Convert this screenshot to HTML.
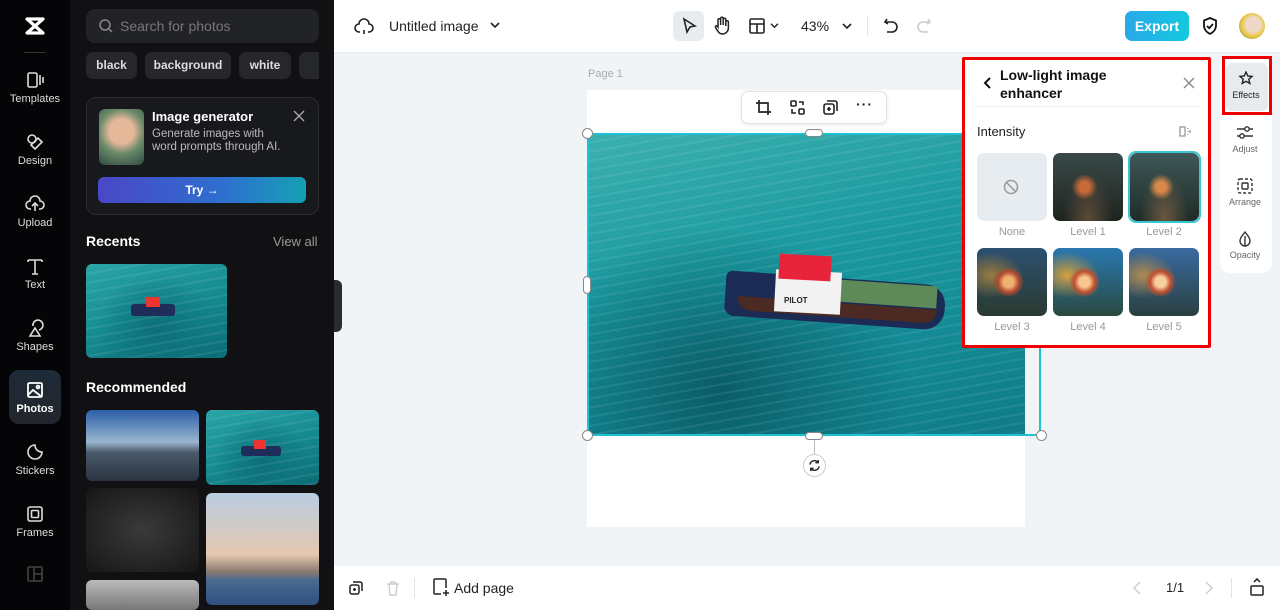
<!DOCTYPE html>
<html><head><meta charset="utf-8"><style>
*{box-sizing:border-box;margin:0;padding:0}
body{width:1280px;height:610px;overflow:hidden;font-family:"Liberation Sans",sans-serif;background:#f1f4f6;position:relative}
.abs{position:absolute}
.nav{left:0;top:0;width:70px;height:610px;background:#050507}
.navi{position:absolute;left:0;width:70px;text-align:center;color:#ddd;font-size:11px}
.navi svg{display:block;margin:0 auto 3px}
.panel{left:70px;top:0;width:264px;height:610px;background:#111114}
.chip{position:absolute;top:52px;height:27px;border-radius:7px;background:#26272b;color:#ddd;font-size:12px;font-weight:bold;line-height:27px;text-align:center}
.top{left:334px;top:0;width:946px;height:52px;background:#fff}
.bot{left:334px;top:566px;width:946px;height:44px;background:#fff}
.thumb{position:absolute;border-radius:6px;overflow:hidden}
.sea{background:radial-gradient(ellipse at 50% 70%,#0c6f78,transparent 60%),linear-gradient(160deg,#2aa5a8,#168c93 50%,#0b6c75)}
.waves{background-image:repeating-linear-gradient(170deg,rgba(255,255,255,.08) 0 2px,transparent 2px 9px)}
.lamp{position:absolute;width:70px;height:68px;border-radius:7px;overflow:hidden}
.lbl{position:absolute;width:70px;text-align:center;font-size:11px;color:#999}
.ti{position:absolute;width:48px;text-align:center;font-size:9px;color:#666}
.ti svg{display:block;margin:0 auto 3px}
</style></head><body>
<div class="abs nav">
 <svg class="abs" style="left:23px;top:16px" width="24" height="20" viewBox="0 0 24 20"><path d="M4 3h16L4 17h16L4 3z" stroke="#fff" stroke-width="3.2" fill="none" stroke-linejoin="round"/></svg>
 <div class="abs" style="left:24px;top:52px;width:22px;height:1px;background:#333"></div>
 <div class="navi" style="top:70px"><svg width="20" height="20" viewBox="0 0 20 20" fill="none" stroke="#ddd" stroke-width="1.6"><rect x="3" y="3" width="9" height="14" rx="1.5"/><path d="M15 5v10M18 7v6"/></svg>Templates</div>
 <div class="navi" style="top:132px"><svg width="20" height="20" viewBox="0 0 20 20" fill="none" stroke="#ddd" stroke-width="1.6"><circle cx="7" cy="7" r="4"/><path d="M10 17l7-7-4-4-7 7z"/></svg>Design</div>
 <div class="navi" style="top:194px"><svg width="20" height="20" viewBox="0 0 20 20" fill="none" stroke="#ddd" stroke-width="1.6"><path d="M6 15H5a4 4 0 0 1 0-8 5 5 0 0 1 10 0 4 4 0 0 1 0 8h-1M10 17V9M7 12l3-3 3 3"/></svg>Upload</div>
 <div class="navi" style="top:256px"><svg width="20" height="20" viewBox="0 0 20 20" fill="none" stroke="#ddd" stroke-width="1.6"><path d="M3 4h14M10 4v14M3 4v2M17 4v2M7 18h6"/></svg>Text</div>
 <div class="navi" style="top:318px"><svg width="20" height="20" viewBox="0 0 20 20" fill="none" stroke="#ddd" stroke-width="1.6"><path d="M8 8a5 5 0 1 1 6 4M10 10l-5 8h10z"/></svg>Shapes</div>
 <div class="abs" style="left:9px;top:370px;width:52px;height:54px;border-radius:10px;background:linear-gradient(#1e2a38,#23262c)"></div>
 <div class="navi" style="top:380px;color:#fff;font-weight:bold"><svg width="20" height="20" viewBox="0 0 20 20" fill="none" stroke="#fff" stroke-width="1.8"><rect x="3" y="3" width="14" height="14" rx="1.5"/><path d="M3 15l5-5 9 7"/><circle cx="13" cy="7" r="1.4"/></svg>Photos</div>
 <div class="navi" style="top:442px"><svg width="20" height="20" viewBox="0 0 20 20" fill="none" stroke="#ddd" stroke-width="1.6"><path d="M17 10a7 7 0 1 1-7-7c0 4 3 7 7 7z"/></svg>Stickers</div>
 <div class="navi" style="top:504px"><svg width="20" height="20" viewBox="0 0 20 20" fill="none" stroke="#ddd" stroke-width="1.6"><rect x="3" y="3" width="14" height="14" rx="2"/><rect x="6.5" y="6.5" width="7" height="7" rx="1"/></svg>Frames</div>
 <svg class="abs" style="left:27px;top:566px" width="16" height="16" viewBox="0 0 16 16" fill="none" stroke="#444" stroke-width="1.6"><rect x="1" y="1" width="14" height="14" rx="1"/><path d="M7 1v14M7 8h8"/></svg>
</div>
<div class="abs panel">
 <div class="abs" style="left:16px;top:9px;width:233px;height:34px;border-radius:9px;background:#222327"></div>
 <svg class="abs" style="left:28px;top:18px" width="16" height="16" viewBox="0 0 16 16" fill="none" stroke="#888" stroke-width="1.5"><circle cx="7" cy="7" r="5"/><path d="M11 11l3 3"/></svg>
 <div class="abs" style="left:50px;top:18px;font-size:14px;color:#777">Search for photos</div>
 <div class="chip" style="left:16px;width:51px">black</div>
 <div class="chip" style="left:75px;width:86px">background</div>
 <div class="chip" style="left:169px;width:52px">white</div>
 <div class="chip" style="left:229px;width:20px;border-radius:7px 0 0 7px"></div>
 <div class="abs" style="left:16px;top:97px;width:233px;height:118px;border-radius:10px;background:#18191c;border:1px solid #2a2b2f"></div>
 <div class="abs" style="left:29px;top:109px;width:45px;height:56px;border-radius:6px;background:radial-gradient(circle at 50% 40%,#e6b89a 0 30%,#6b8a6a 55%,#2d4a40)"></div>
 <div class="abs" style="left:82px;top:109px;color:#fff;font-weight:bold;font-size:13px">Image generator</div>
 <div class="abs" style="left:82px;top:128px;color:#bbb;font-size:11.5px;line-height:13px">Generate images with<br>word prompts through AI.</div>
 <svg class="abs" style="left:223px;top:110px" width="12" height="12" viewBox="0 0 12 12" stroke="#aaa" stroke-width="1.3"><path d="M1 1l10 10M11 1L1 11"/></svg>
 <div class="abs" style="left:28px;top:177px;width:208px;height:26px;border-radius:6px;background:linear-gradient(90deg,#4a47c6,#2e6fd0 60%,#15a0b4);color:#fff;font-size:12px;font-weight:bold;text-align:center;line-height:26px">Try →</div>
 <div class="abs" style="left:16px;top:233px;color:#fff;font-weight:bold;font-size:14px">Recents</div>
 <div class="abs" style="left:203px;top:234px;color:#999;font-size:13px">View all</div>
 <div class="thumb sea" style="left:16px;top:264px;width:141px;height:94px"><div class="abs waves" style="inset:0"></div><div class="abs" style="left:45px;top:40px;width:44px;height:12px;background:#1e2d5a;border-radius:3px"></div><div class="abs" style="left:60px;top:33px;width:14px;height:10px;background:#e33"></div></div>
 <div class="abs" style="left:16px;top:379px;color:#fff;font-weight:bold;font-size:14px">Recommended</div>
 <div class="thumb" style="left:16px;top:410px;width:113px;height:71px;background:linear-gradient(#2b5fa8,#9ab6d0 45%,#4a5a6a 60%,#2a3340)"></div>
 <div class="thumb sea" style="left:136px;top:410px;width:113px;height:75px"><div class="abs waves" style="inset:0"></div><div class="abs" style="left:35px;top:36px;width:40px;height:10px;background:#1e2d5a;border-radius:3px"></div><div class="abs" style="left:48px;top:30px;width:12px;height:9px;background:#e33"></div></div>
 <div class="thumb" style="left:16px;top:488px;width:113px;height:84px;background:radial-gradient(ellipse at 50% 50%,#3a3a3a,#161616)"></div>
 <div class="thumb" style="left:136px;top:493px;width:113px;height:112px;background:linear-gradient(#b9cde0,#e5c8b0 55%,#8c7a70 70%,#4a6a90 78%,#2f5080)"></div>
 <div class="thumb" style="left:16px;top:580px;width:113px;height:30px;background:linear-gradient(#bbb,#777)"></div>
 <div class="abs" style="left:264px;top:280px;width:8px;height:52px;background:#2a2b2f;border-radius:0 6px 6px 0"></div>
</div>
<div class="abs top">
 <svg class="abs" style="left:20px;top:17px" width="20" height="18" viewBox="0 0 20 18" fill="none" stroke="#222" stroke-width="1.6"><path d="M6 15H5a4 4 0 0 1 0-8 5 5 0 0 1 10 0 4 4 0 0 1 0 8h-1M10 13v4"/></svg>
 <div class="abs" style="left:55px;top:18px;font-size:14px;color:#222">Untitled image</div>
 <svg class="abs" style="left:156px;top:21px" width="10" height="8" viewBox="0 0 10 8" fill="none" stroke="#222" stroke-width="1.6"><path d="M1 2l4 4 4-4"/></svg>
 <div class="abs" style="left:339px;top:11px;width:31px;height:30px;border-radius:6px;background:#e9ecef"></div>
 <svg class="abs" style="left:347px;top:17px" width="16" height="18" viewBox="0 0 16 18" fill="none" stroke="#222" stroke-width="1.6"><path d="M3 2l11 7-5 1-3 5z"/></svg>
 <svg class="abs" style="left:379px;top:16px" width="18" height="20" viewBox="0 0 18 20" fill="none" stroke="#222" stroke-width="1.5"><path d="M5 11V4a1.3 1.3 0 0 1 2.6 0v5V2.5a1.3 1.3 0 0 1 2.6 0V9V3.5a1.3 1.3 0 0 1 2.6 0V10V6a1.3 1.3 0 0 1 2.6 0v6a6 6 0 0 1-6 6c-3 0-4-2-6-5l-1-2a1.2 1.2 0 0 1 2-1z"/></svg>
 <svg class="abs" style="left:414px;top:17px" width="18" height="18" viewBox="0 0 18 18" fill="none" stroke="#222" stroke-width="1.6"><rect x="2" y="2" width="14" height="14" rx="1.5"/><path d="M2 7h14M9 7v9"/></svg>
 <svg class="abs" style="left:436px;top:22px" width="9" height="7" viewBox="0 0 10 8" fill="none" stroke="#222" stroke-width="1.6"><path d="M1 2l4 4 4-4"/></svg>
 <div class="abs" style="left:467px;top:18px;font-size:14px;color:#222">43%</div>
 <svg class="abs" style="left:508px;top:22px" width="10" height="8" viewBox="0 0 10 8" fill="none" stroke="#222" stroke-width="1.6"><path d="M1 2l4 4 4-4"/></svg>
 <div class="abs" style="left:533px;top:16px;width:1px;height:20px;background:#e3e3e3"></div>
 <svg class="abs" style="left:549px;top:17px" width="16" height="18" viewBox="0 0 16 18" fill="none" stroke="#222" stroke-width="1.6"><path d="M4 2L2 5l3 2M2 5h7a5 5 0 0 1 0 10H4"/></svg>
 <svg class="abs" style="left:582px;top:17px" width="16" height="18" viewBox="0 0 16 18" fill="none" stroke="#ccc" stroke-width="1.6"><path d="M12 2l2 3-3 2M14 5H7a5 5 0 0 0 0 10h5"/></svg>
 <div class="abs" style="left:791px;top:11px;width:64px;height:30px;border-radius:7px;background:linear-gradient(90deg,#2aa8e8,#13c9df);color:#fff;font-weight:bold;font-size:14px;text-align:center;line-height:30px">Export</div>
 <svg class="abs" style="left:867px;top:16px" width="18" height="20" viewBox="0 0 18 20" fill="none" stroke="#111" stroke-width="1.8"><path d="M9 2l6 2.5v5c0 4-3 7-6 8.5-3-1.5-6-4.5-6-8.5v-5z"/><path d="M6 10l2.2 2.2L12 8"/></svg>
 <div class="abs" style="left:905px;top:13px;width:26px;height:26px;border-radius:50%;background:radial-gradient(circle at 55% 45%,#f0d8c8 0 35%,#e9c53a 60%,#2b7fa0)"></div>
</div>
<div class="abs" style="left:334px;top:52px;width:946px;height:2px;background:#eceff2"></div>
<div class="abs" style="left:588px;top:68px;font-size:11px;color:#aaa">Page 1</div>
<div class="abs" style="left:587px;top:90px;width:438px;height:437px;background:#fff"></div>
<div class="abs sea" style="left:587px;top:133px;width:438px;height:303px;background:radial-gradient(ellipse at 30% 85%,#0a5d68,transparent 45%),linear-gradient(165deg,#3cb0b0,#1b9aa0 40%,#138a95 70%,#0f7b86)">
 <div class="abs waves" style="inset:0"></div>
 <div class="abs" style="left:138px;top:145px;width:220px;height:45px;background:#1c2b55;border-radius:6px 20px 20px 10px;transform:rotate(4deg)"></div>
 <div class="abs" style="left:150px;top:170px;width:200px;height:14px;background:#4a2a22;border-radius:0 0 20px 20px;transform:rotate(4deg)"></div>
 <div class="abs" style="left:250px;top:150px;width:100px;height:22px;background:#5d8a58;transform:rotate(4deg)"></div>
 <div class="abs" style="left:188px;top:138px;width:66px;height:42px;background:#f2f2f2;transform:rotate(3deg)"></div>
 <div class="abs" style="left:192px;top:122px;width:52px;height:25px;background:#e8243a;transform:rotate(3deg)"></div>
 <div class="abs" style="left:197px;top:163px;font-size:8px;font-weight:bold;color:#222">PILOT</div>
</div>
<div class="abs" style="left:587px;top:133px;width:454px;height:303px;border:2px solid #1ec0d6"></div>
<div class="abs" style="left:582px;top:128px;width:11px;height:11px;border-radius:50%;background:#fff;border:1px solid #888"></div>
<div class="abs" style="left:582px;top:430px;width:11px;height:11px;border-radius:50%;background:#fff;border:1px solid #888"></div>
<div class="abs" style="left:1036px;top:430px;width:11px;height:11px;border-radius:50%;background:#fff;border:1px solid #888"></div>
<div class="abs" style="left:805px;top:129px;width:18px;height:8px;border-radius:4px;background:#fff;border:1px solid #888"></div>
<div class="abs" style="left:805px;top:432px;width:18px;height:8px;border-radius:4px;background:#fff;border:1px solid #888"></div>
<div class="abs" style="left:583px;top:276px;width:8px;height:18px;border-radius:4px;background:#fff;border:1px solid #888"></div>
<div class="abs" style="left:814px;top:440px;width:1px;height:14px;background:#bbb"></div>
<div class="abs" style="left:803px;top:454px;width:23px;height:23px;border-radius:50%;background:#fff;border:1px solid #ccc"></div>
<svg class="abs" style="left:808px;top:459px" width="13" height="13" viewBox="0 0 14 14" fill="none" stroke="#222" stroke-width="1.5"><path d="M2 6a5 5 0 0 1 9-2M12 8a5 5 0 0 1-9 2M11 1v3H8M3 13v-3h3"/></svg>
<div class="abs" style="left:741px;top:91px;width:146px;height:33px;background:#fff;border-radius:7px;border:1px solid #e2e2e2;box-shadow:0 1px 4px rgba(0,0,0,.08)"></div>
<svg class="abs" style="left:755px;top:99px" width="17" height="17" viewBox="0 0 17 17" fill="none" stroke="#222" stroke-width="1.7"><path d="M4 1v12h12M1 4h12v12"/></svg>
<svg class="abs" style="left:789px;top:99px" width="17" height="17" viewBox="0 0 17 17" fill="none" stroke="#222" stroke-width="1.6"><rect x="2" y="2" width="5" height="5" rx="1"/><rect x="10" y="10" width="5" height="5" rx="1"/><path d="M10 3h4v3M3 10v4h4"/></svg>
<svg class="abs" style="left:822px;top:99px" width="17" height="17" viewBox="0 0 17 17" fill="none" stroke="#222" stroke-width="1.6"><rect x="2" y="5" width="10" height="10" rx="2"/><path d="M5 2h8a2 2 0 0 1 2 2v8M7 8v4M5 10h4"/></svg>
<div class="abs" style="left:856px;top:96px;font-size:14px;font-weight:bold;color:#222;letter-spacing:1px">···</div>
<div class="abs" style="left:962px;top:57px;width:249px;height:291px;background:#fff;border:3px solid #e00;border-radius:2px"></div>
<svg class="abs" style="left:982px;top:76px" width="10" height="14" viewBox="0 0 10 14" fill="none" stroke="#111" stroke-width="2"><path d="M8 2L3 7l5 5"/></svg>
<div class="abs" style="left:1000px;top:66px;font-size:14px;font-weight:bold;color:#111;line-height:18px">Low-light image<br>enhancer</div>
<svg class="abs" style="left:1183px;top:77px" width="12" height="12" viewBox="0 0 12 12" stroke="#888" stroke-width="1.4"><path d="M1 1l10 10M11 1L1 11"/></svg>
<div class="abs" style="left:977px;top:106px;width:222px;height:1px;background:#eee"></div>
<div class="abs" style="left:977px;top:124px;font-size:13px;color:#222">Intensity</div>
<svg class="abs" style="left:1179px;top:125px" width="13" height="13" viewBox="0 0 13 13" fill="none" stroke="#999" stroke-width="1.3"><rect x="1" y="2" width="5" height="9"/><path d="M9 3v1M9 6v1M9 9v1M11 5v3"/></svg>
<div class="lamp" style="left:977px;top:153px;background:#e6ecef"></div>
<svg class="abs" style="left:1003px;top:179px" width="16" height="16" viewBox="0 0 16 16" fill="none" stroke="#999" stroke-width="1.5"><circle cx="8" cy="8" r="6.5"/><path d="M3.5 3.5l9 9"/></svg>
<div class="lamp" style="left:1053px;top:153px;background:radial-gradient(circle at 45% 50%,#c86a3a 0 10%,transparent 25%),radial-gradient(ellipse at 50% 95%,#5a4a38,transparent 50%),linear-gradient(#3a4a48,#1e2420)"></div>
<div class="abs" style="left:1128px;top:151px;width:73px;height:72px;border-radius:8px;border:2px solid #3ac6cf"></div>
<div class="lamp" style="left:1130px;top:153px;width:69px;height:68px;background:radial-gradient(circle at 45% 50%,#d8884a 0 10%,transparent 25%),radial-gradient(ellipse at 50% 95%,#6a5840,transparent 50%),linear-gradient(#3e5858,#1f2c28)"></div>
<div class="lbl" style="left:977px;top:226px">None</div>
<div class="lbl" style="left:1053px;top:226px">Level 1</div>
<div class="lbl" style="left:1129px;top:226px">Level 2</div>
<div class="lamp" style="left:977px;top:248px;background:radial-gradient(circle at 45% 50%,#f0b070 0 10%,#b04a30 20%,transparent 30%),radial-gradient(ellipse at 20% 40%,#9a7a40,transparent 40%),linear-gradient(#2c5070,#2a3a30)"></div>
<div class="lamp" style="left:1053px;top:248px;background:radial-gradient(circle at 45% 50%,#f8c890 0 10%,#c05030 20%,transparent 30%),radial-gradient(ellipse at 20% 40%,#d4a040,transparent 40%),linear-gradient(#2a78b0,#2a4a40)"></div>
<div class="lamp" style="left:1129px;top:248px;background:radial-gradient(circle at 45% 50%,#f8d0a0 0 10%,#c05030 20%,transparent 30%),radial-gradient(ellipse at 20% 40%,#b08a50,transparent 40%),linear-gradient(#3a6aa0,#2a4040)"></div>
<div class="lbl" style="left:977px;top:321px">Level 3</div>
<div class="lbl" style="left:1053px;top:321px">Level 4</div>
<div class="lbl" style="left:1129px;top:321px">Level 5</div>
<div class="abs" style="left:1220px;top:57px;width:52px;height:216px;background:#fff;border-radius:10px"></div>
<div class="abs" style="left:1226px;top:63px;width:42px;height:48px;background:#e8ebee;border-radius:6px"></div>
<div class="abs" style="left:1222px;top:56px;width:50px;height:59px;border:3px solid #e00"></div>
<div class="ti" style="left:1222px;top:71px;color:#222"><svg width="16" height="16" viewBox="0 0 16 16" fill="none" stroke="#222" stroke-width="1.4"><path d="M8 1l1.8 4 4.2.4-3.2 2.8 1 4.3L8 10.3 4.2 12.5l1-4.3L2 5.4l4.2-.4z"/></svg>Effects</div>
<div class="ti" style="left:1221px;top:125px"><svg width="18" height="16" viewBox="0 0 18 16" fill="none" stroke="#333" stroke-width="1.4"><path d="M1 4h16M1 11h16"/><circle cx="11" cy="4" r="2.2" fill="#fff"/><circle cx="6" cy="11" r="2.2" fill="#fff"/></svg>Adjust</div>
<div class="ti" style="left:1221px;top:178px"><svg width="16" height="16" viewBox="0 0 16 16" fill="none" stroke="#333" stroke-width="1.4"><rect x="1" y="1" width="14" height="14" rx="2" stroke-dasharray="3 2"/><rect x="5" y="5" width="6" height="6" rx="1"/></svg>Arrange</div>
<div class="ti" style="left:1221px;top:231px"><svg width="16" height="16" viewBox="0 0 16 16" fill="none" stroke="#333" stroke-width="1.4"><path d="M8 1c3 4 5 6 5 9a5 5 0 0 1-10 0c0-3 2-5 5-9zM8 5v10"/></svg>Opacity</div>
<div class="abs bot">
 <svg class="abs" style="left:14px;top:14px" width="16" height="16" viewBox="0 0 16 16" fill="none" stroke="#222" stroke-width="1.5"><rect x="2" y="5" width="9" height="9" rx="2"/><path d="M5 2h7a2 2 0 0 1 2 2v7M6.5 8v3M5 9.5h3"/></svg>
 <svg class="abs" style="left:52px;top:14px" width="14" height="16" viewBox="0 0 14 16" fill="none" stroke="#ccc" stroke-width="1.4"><path d="M1 4h12M5 4V2h4v2M3 4l1 11h6l1-11"/></svg>
 <div class="abs" style="left:80px;top:12px;width:1px;height:20px;background:#e3e3e3"></div>
 <svg class="abs" style="left:98px;top:12px" width="18" height="19" viewBox="0 0 18 19" fill="none" stroke="#222" stroke-width="1.5"><path d="M9 16H3a1 1 0 0 1-1-1V2a1 1 0 0 1 1-1h10a1 1 0 0 1 1 1v8M14 12v6M11 15h6"/></svg>
 <div class="abs" style="left:120px;top:14px;font-size:14px;color:#222">Add page</div>
 <svg class="abs" style="left:799px;top:15px" width="8" height="14" viewBox="0 0 8 14" fill="none" stroke="#ccc" stroke-width="1.4"><path d="M7 1L1 7l6 6"/></svg>
 <div class="abs" style="left:832px;top:14px;font-size:13px;color:#222">1/1</div>
 <svg class="abs" style="left:871px;top:15px" width="8" height="14" viewBox="0 0 8 14" fill="none" stroke="#ccc" stroke-width="1.4"><path d="M1 1l6 6-6 6"/></svg>
 <div class="abs" style="left:897px;top:12px;width:1px;height:20px;background:#e3e3e3"></div>
 <svg class="abs" style="left:915px;top:12px" width="16" height="18" viewBox="0 0 16 18" fill="none" stroke="#222" stroke-width="1.5"><path d="M5 4l3-3 3 3"/><rect x="2" y="8" width="12" height="9" rx="1"/></svg>
</div>
</body></html>
